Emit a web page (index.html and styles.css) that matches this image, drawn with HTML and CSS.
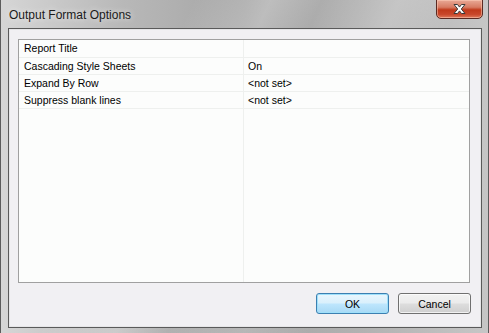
FILE: index.html
```html
<!DOCTYPE html>
<html>
<head>
<meta charset="utf-8">
<link rel="stylesheet" href="styles.css">
</head>
<body>
<div class="window">
  <div class="titlebar">
    <span class="title">Output Format Options</span>
    <button class="close" aria-label="Close">
      <svg width="17" height="12" viewBox="0 0 17 12">
        <path d="M3 1.5h3.5l2 2.6 2-2.6h3.5l-3.7 4.5 3.7 4.5h-3.5l-2-2.6-2 2.6h-3.5l3.7-4.5z" fill="#ffffff" stroke="#3a3a3a" stroke-width="1" stroke-linejoin="round"/>
      </svg>
    </button>
  </div>
  <div class="client">
    <div class="grid">
      <div class="row first"><div class="cell name">Report Title</div><div class="cell value"></div></div>
      <div class="row"><div class="cell name">Cascading Style Sheets</div><div class="cell value">On</div></div>
      <div class="row"><div class="cell name">Expand By Row</div><div class="cell value">&lt;not set&gt;</div></div>
      <div class="row"><div class="cell name">Suppress blank lines</div><div class="cell value">&lt;not set&gt;</div></div>
      <div class="row filler"><div class="cell name"></div><div class="cell value"></div></div>
    </div>
    <div class="buttons">
      <button class="btn default">OK</button>
      <button class="btn">Cancel</button>
    </div>
  </div>
</div>
</body>
</html>
```

FILE: styles.css
```css
html, body {
  margin: 0;
  padding: 0;
  width: 489px;
  height: 333px;
  overflow: hidden;
}
body {
  font-family: "Liberation Sans", Arial, sans-serif;
  font-size: 10.5px;
  color: #000;
}
.window {
  box-sizing: border-box;
  width: 489px;
  height: 333px;
  padding: 0 6px 5px 7px;
  display: flex;
  flex-direction: column;
  border-left: 1px solid #5c5c5c;
  border-right: 1px solid #5c5c5c;
  background:
    linear-gradient(115deg, rgba(255,255,255,0.0) 30%, rgba(255,255,255,0.25) 42%, rgba(255,255,255,0) 50%, rgba(255,255,255,0.2) 62%, rgba(255,255,255,0) 72%),
    linear-gradient(90deg, #d6d6d6 0%, #b8b8b8 25%, #a5a5a5 50%, #b2b2b2 75%, #c6c6c6 100%);
}
.titlebar {
  height: 28px;
  flex: none;
  display: flex;
  align-items: flex-start;
  justify-content: space-between;
  margin-left: -7px;
  margin-right: -6px;
  padding-left: 8px;
  padding-right: 5px;
}
.title {
  font-family: "Liberation Sans", Arial, sans-serif;
  font-size: 12px;
  color: #1a1a1a;
  line-height: 14px;
  margin-top: 8px;
  text-shadow: 0 0 6px rgba(255,255,255,0.8);
}
.close {
  width: 47px;
  height: 20px;
  margin-top: -1px;
  padding: 0;
  box-sizing: border-box;
  border: 1px solid #5b2a22;
  border-radius: 0 0 5px 5px;
  background: linear-gradient(180deg, #e9a996 0%, #d77b63 40%, #c0391a 55%, #c9472a 80%, #de7a5c 100%);
  box-shadow: inset 0 0 0 1px rgba(255,210,190,0.5);
  display: flex;
  align-items: center;
  justify-content: center;
}
.close svg { display: block; }
.client {
  flex: 1;
  box-sizing: border-box;
  background: #f1f0f3;
  border: 1px solid #5a5a5a;
  box-shadow: inset 0 0 0 1px #e6e6e8;
  padding: 10px 11px 13px 9px;
  display: flex;
  flex-direction: column;
}
.grid {
  flex: 1;
  background: #fcfdfc;
  border: 1px solid #a0a0a0;
  display: flex;
  flex-direction: column;
}
.row {
  display: grid;
  grid-template-columns: 225px 1fr;
  height: 16px;
  border-bottom: 1px solid #eef0ee;
}
.row.first {
  height: 17px;
}
.row.filler {
  flex: 1;
  border-bottom: none;
}
.cell {
  line-height: 17px;
  white-space: nowrap;
  overflow: hidden;
}
.name {
  padding-left: 5px;
  border-right: 1px solid #eef0ee;
}
.value {
  padding-left: 4px;
}
.buttons {
  flex: none;
  display: flex;
  justify-content: flex-end;
  gap: 9px;
  margin-top: 10px;
  margin-right: -1px;
}
.btn {
  width: 73px;
  height: 21px;
  box-sizing: border-box;
  font-family: "Liberation Sans", Arial, sans-serif;
  font-size: 10.5px;
  color: #000;
  padding: 0;
  border: 1px solid #707070;
  border-radius: 3px;
  background: linear-gradient(180deg, #f2f2f2 0%, #ebebeb 48%, #dddddd 52%, #cfcfcf 100%);
  box-shadow: inset 0 0 0 1px rgba(255,255,255,0.7);
}
.btn.default {
  border-color: #3c7fb1;
  background: linear-gradient(180deg, #eaf6fd 0%, #d9f0fc 48%, #bee6fd 52%, #a7d9f5 100%);
  box-shadow: inset 0 0 0 1px #9fe0fa;
}
```
